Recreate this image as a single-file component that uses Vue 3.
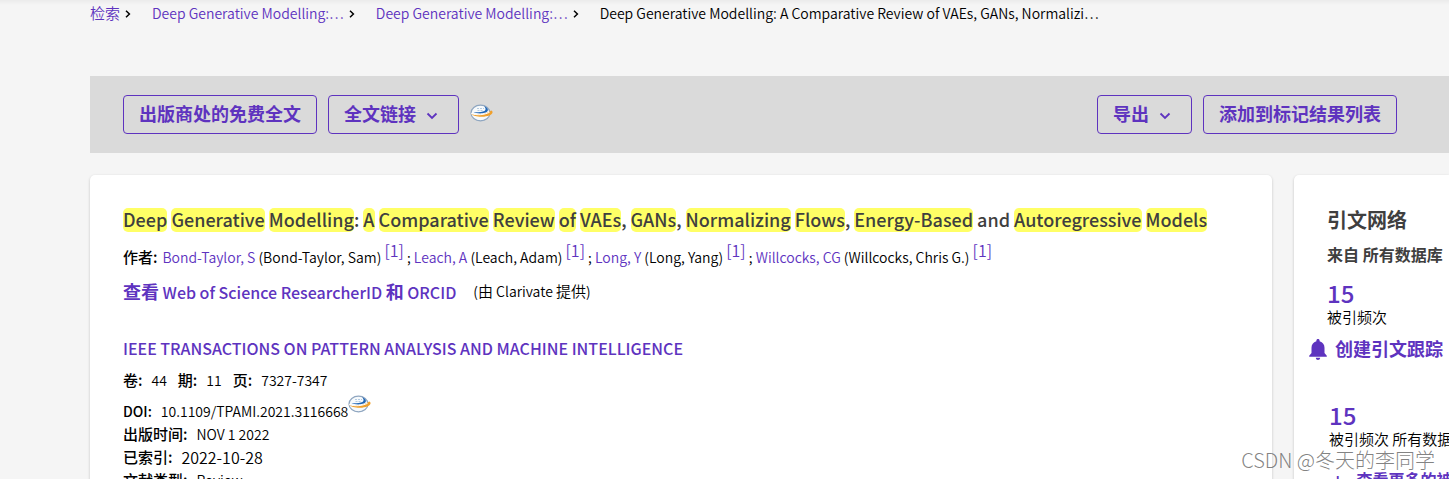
<script setup>
const crumbs = [
  { text: '检索', cjk: true },
  { text: 'Deep Generative Modelling:…' },
  { text: 'Deep Generative Modelling:…' },
]
const title = [
  ['Deep', ' '], ['Generative', ' '], ['Modelling', ': '], ['A', ' '], ['Comparative', ' '],
  ['Review', ' '], ['of', ' '], ['VAEs', ', '], ['GANs', ', '], ['Normalizing', ' '],
  ['Flows', ', '], ['Energy-Based', ' and '], ['Autoregressive', ' '], ['Models', ''],
]
const authors = [
  { short: 'Bond-Taylor, S', full: 'Bond-Taylor, Sam' },
  { short: 'Leach, A', full: 'Leach, Adam' },
  { short: 'Long, Y', full: 'Long, Yang' },
  { short: 'Willcocks, CG', full: 'Willcocks, Chris G.' },
]
</script>

<template>
  <div class="page">
    <nav class="crumbs" aria-label="breadcrumb">
      <span v-for="(c, i) in crumbs" :key="i" class="crumb">
        <a href="#" :class="{ cjk: c.cjk }">{{ c.text }}</a>
        <svg class="sep" viewBox="0 0 6 8" aria-hidden="true"><path d="M1 .8 4.4 4 1 7.2" /></svg>
      </span>
      <span class="current">Deep Generative Modelling: A Comparative Review of VAEs, GANs, Normalizi…</span>
    </nav>

    <div class="toolbar">
      <button type="button" class="btn">出版商处的免费全文</button>
      <button type="button" class="btn">
        全文链接
        <svg class="chev" viewBox="0 0 12 8" aria-hidden="true"><path d="M1.5 1.5 6 6l4.5-4.5" /></svg>
      </button>
      <svg class="globe" viewBox="0 0 24 18" aria-hidden="true">
        <ellipse cx="10.5" cy="9" rx="9.5" ry="7.8" fill="#f7fafc" stroke="#8fa6c0" stroke-width="1.2" />
        <path d="M7 4.500h7M7.500 6.500h5" stroke="#b4cbe2" stroke-width="1.2" stroke-dasharray="2 1" />
        <path d="M14 2c5.500 2.500 5.500 6.500-1.500 7.300-4 .3-7-.2-9-1 4 .1 9 0 11-1.200 1.700-1.200 1.300-3.300-.5-5.100z" fill="#2267b5" />
        <path d="M.8 9.500c5.500 2 14 1.500 20.700-3 3.500 2.500-2 6.300-10 6.300C7 12.800 2.500 11.600.8 9.500z" fill="#f0a02c" />
        <path d="M1 9.600c6.500 2 13 1.300 18.500-1.300" fill="none" stroke="#fff" stroke-width="1" />
        <path d="M4 12.500c4 1.300 9 1.300 13-.3-2 4.500-10.500 5.500-13 .3z" fill="#f7fafc" />
      </svg>
      <div class="right">
        <button type="button" class="btn">
          导出
          <svg class="chev" viewBox="0 0 12 8" aria-hidden="true"><path d="M1.5 1.5 6 6l4.5-4.5" /></svg>
        </button>
        <button type="button" class="btn">添加到标记结果列表</button>
      </div>
    </div>

    <div class="columns">
      <main class="card record">
        <h1><template v-for="([w, after], i) in title" :key="i"><mark>{{ w }}</mark>{{ after }}</template></h1>
        <p class="authors">
          <b class="label">作者:</b>
          <template v-for="(a, i) in authors" :key="i"><a href="#">{{ a.short }}</a> ({{ a.full }}) <sup><a href="#">[1]</a></sup><template v-if="i < 3"> ; </template></template>
        </p>
        <p class="rid">
          <a href="#"><span class="big">查看</span> Web of Science ResearcherID <span class="big">和</span> ORCID</a>
          <span class="by">(<span class="cjk">由</span> Clarivate <span class="cjk">提供</span>)</span>
        </p>
        <a href="#" class="journal">IEEE TRANSACTIONS ON PATTERN ANALYSIS AND MACHINE INTELLIGENCE</a>
        <div class="meta issue">
          <b>卷:</b><span>44</span><b>期:</b><span>11</span><b>页:</b><span>7327-7347</span>
        </div>
        <div class="meta doi">
          <b class="latin">DOI:</b><span>10.1109/TPAMI.2021.3116668</span>
          <svg class="globe" viewBox="0 0 24 18" aria-hidden="true">
            <ellipse cx="10.5" cy="9" rx="9.5" ry="7.8" fill="#f7fafc" stroke="#8fa6c0" stroke-width="1.2" />
            <path d="M7 4.500h7M7.500 6.500h5" stroke="#b4cbe2" stroke-width="1.2" stroke-dasharray="2 1" />
            <path d="M14 2c5.500 2.500 5.500 6.500-1.500 7.300-4 .3-7-.2-9-1 4 .1 9 0 11-1.200 1.700-1.200 1.300-3.300-.5-5.100z" fill="#2267b5" />
            <path d="M.8 9.500c5.500 2 14 1.500 20.700-3 3.500 2.500-2 6.300-10 6.300C7 12.800 2.500 11.600.8 9.500z" fill="#f0a02c" />
            <path d="M1 9.600c6.500 2 13 1.300 18.500-1.300" fill="none" stroke="#fff" stroke-width="1" />
            <path d="M4 12.500c4 1.300 9 1.300 13-.3-2 4.500-10.500 5.500-13 .3z" fill="#f7fafc" />
          </svg>
        </div>
        <div class="meta"><b>出版时间:</b><span>NOV 1 2022</span></div>
        <div class="meta indexed"><b>已索引:</b><span>2022-10-28</span></div>
        <div class="meta"><b>文献类型:</b><span>Review</span></div>
      </main>

      <aside class="card network">
        <h2>引文网络</h2>
        <h3>来自 所有数据库</h3>
        <a href="#" class="count">15</a>
        <div class="caption">被引频次</div>
        <a href="#" class="alert">
          <svg viewBox="0 0 18 21" aria-hidden="true"><path d="M9 0c1 0 1.600.7 1.600 1.600v.6c3.200.8 4.900 3.400 4.900 6.600v5.200l2.300 2.800v1H.2v-1L2.500 14V8.800c0-3.200 1.700-5.800 4.900-6.600v-.6C7.400.7 8 0 9 0zM6.800 18.800h4.400C11 20.200 10.200 21 9 21s-2-.8-2.200-2.200z" /></svg>
          创建引文跟踪
        </a>
        <div class="total">
          <a href="#" class="count">15</a>
          <div class="caption">被引频次 所有数据库</div>
        </div>
        <a href="#" class="more"><span>+</span>查看更多的被引频次</a>
      </aside>
    </div>
    <div class="watermark">CSDN @冬天的李同学</div>
  </div>
</template>

<style>
html { overflow: hidden; }
body { background: #f5f5f5; }
</style>

<style scoped>
.page {
  position: relative;
  height: 100vh;
  overflow: hidden;
  padding-left: 90px;
  background: linear-gradient(#ebebeb, #f5f5f5 5px);
  color: #000;
  font: 350 14px/20px "Noto Sans CJK SC", sans-serif;
  white-space: nowrap;
}
* { box-sizing: border-box; }
a { color: #5e33bf; text-decoration: none; }
h1, h2, h3, p { margin: 0; }
.crumbs { display: flex; gap: 21px; height: 76px; padding-top: 3px; }
.crumb { display: flex; gap: 5px; height: 20px; align-items: center; }
.crumb .cjk, .by .cjk { font-size: 15px; }
.sep { width: 6px; height: 8px; margin-top: 2px; fill: none; stroke: #000; stroke-width: 1.5; }
.toolbar {
  display: flex;
  align-items: center;
  gap: 11px;
  height: 77px;
  padding: 0 52px 0 33px;
  background: #dadada;
}
.right { display: flex; gap: 11px; margin-left: auto; }
.btn {
  display: flex;
  align-items: center;
  gap: 10px;
  height: 39px;
  padding: 0 15px 3px;
  border: 1px solid #5e33bf;
  border-radius: 4px;
  background: transparent;
  color: #5e33bf;
  font: 700 18px/24px "Noto Sans CJK SC", sans-serif;
}
.chev { width: 12px; height: 8px; margin: 5px 5px 0 0; fill: none; stroke: #5e33bf; stroke-width: 1.8; }
.globe { width: 24px; height: 18px; margin-bottom: 4px; }
.columns { display: grid; grid-template-columns: 1fr 155px; gap: 22px; margin-top: 22px; }
.card { min-height: 400px; background: #fff; box-shadow: 0 1px 3px rgba(0, 0, 0, .2); }
.record { padding: 33px 33px 0; border-radius: 5px 5px 0 0; }
.network { padding: 33px 0 0 33px; border-radius: 5px 0 0 0; overflow: hidden; color: #3f3f3f; }
h1 { color: #3f3f3f; font-size: 18px; line-height: 23px; font-weight: 500; }
mark { display: inline-block; height: 24px; border-radius: 5px; background: #ffff66; color: inherit; }
.authors { margin-top: 13px; height: 22px; font-size: 14px; line-height: 22px; }
.label { margin-right: 5px; font-size: 15px; font-weight: 500; }
sup { font-size: 16px; line-height: 10px; }
.rid { display: flex; gap: 17px; align-items: center; margin-top: 12px; height: 24px; }
.rid a { font-size: 16px; font-weight: 500; }
.rid .big { font-size: 18px; font-weight: 700; }
.by { font-size: 14px; }
.journal { display: block; margin-top: 33px; font-size: 16px; line-height: 24px; font-weight: 500; }
.meta { display: flex; align-items: center; gap: 9px; height: 23px; font-size: 14px; }
.meta b { font-size: 15px; font-weight: 500; }
.meta b.latin { font-size: 14px; }
.meta.issue { height: 20px; margin-top: 10px; }
.issue span { margin-right: 2px; }
.meta.doi { height: 23px; margin-top: 9px; }
.doi .globe { margin: -14px 0 0 -9px; }
.indexed span { font-size: 16px; }
h2 { font-size: 20px; line-height: 24px; font-weight: 700; }
h3 { margin-top: 10px; font-size: 16px; line-height: 24px; font-weight: 700; }
.count { display: block; margin-top: 14px; font-size: 24px; line-height: 26px; font-weight: 500; }
.caption { color: #000; font-size: 15px; line-height: 22px; }
.alert { display: flex; align-items: center; gap: 8px; margin: 8px 0 0 -18px; font-size: 18px; line-height: 24px; font-weight: 700; }
.alert svg { width: 18px; height: 21px; margin-top: 3px; fill: #5e33bf; }
.total { margin: 42px 0 0 2px; }
.more { display: flex; gap: 14px; margin: 17px 0 0 6px; font-size: 16px; line-height: 24px; font-weight: 700; }
.watermark {
  position: absolute;
  right: 14px;
  bottom: 7px;
  color: rgba(90, 90, 90, .75);
  font-size: 20px;
  line-height: 24px;
  font-weight: 300;
}
</style>
